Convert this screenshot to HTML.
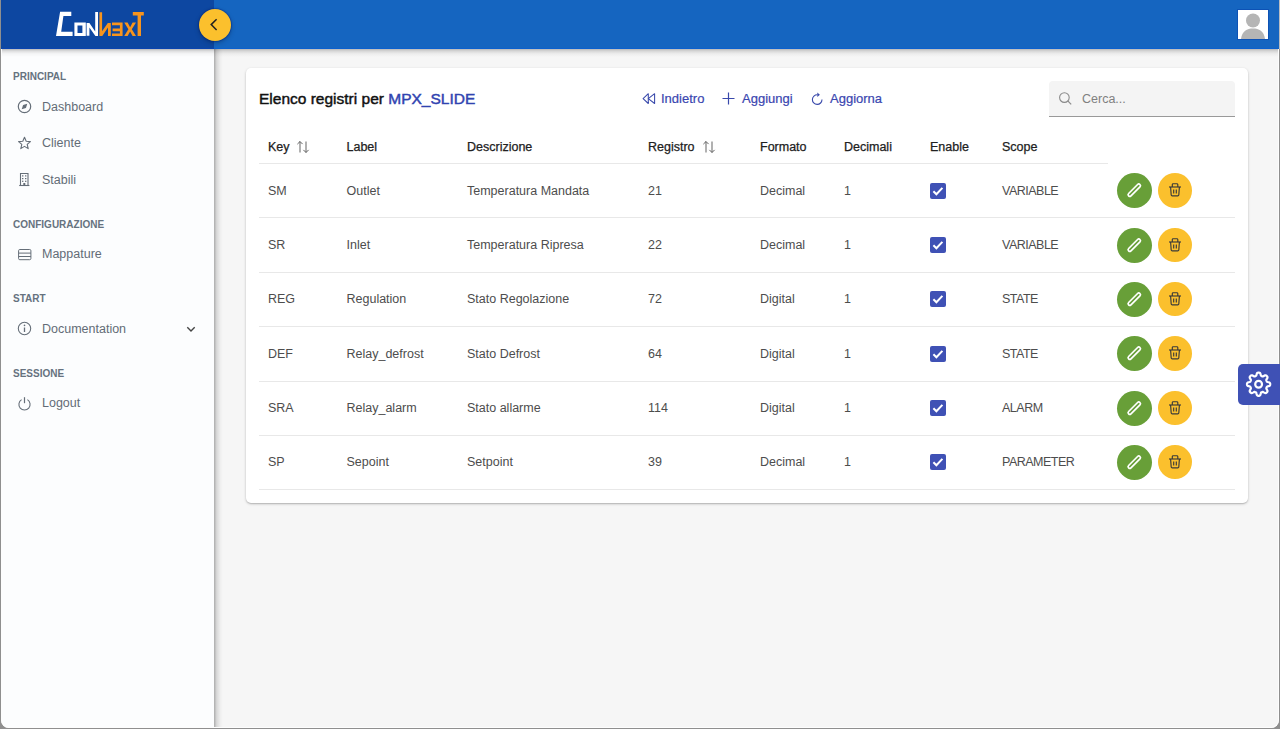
<!DOCTYPE html>
<html><head><meta charset="utf-8">
<style>
*{box-sizing:border-box;margin:0;padding:0}
html,body{width:1280px;height:729px;overflow:hidden;background:#f6f6f6;font-family:"Liberation Sans",sans-serif;position:relative}
div{position:absolute;white-space:nowrap}
svg{display:block}
#hdrL{left:0;top:0;width:214px;height:49px;background:#0d47a1;border-bottom:1px solid #0a44b0}
#hdrR{left:214px;top:0;width:1066px;height:49px;background:#1565c0;border-bottom:1px solid #0b60cf}
#hdrShadow{left:214px;top:49px;width:1066px;height:8px;background:linear-gradient(rgba(0,0,0,.25),rgba(0,0,0,.13) 25%,rgba(0,0,0,.04) 60%,rgba(0,0,0,0))}
#side{left:0;top:49px;width:214px;height:680px;background:#fcfdfe}
#sideR{left:214px;top:49px;width:9px;height:680px;background:linear-gradient(to right,rgba(0,0,0,.30),rgba(0,0,0,.12) 30%,rgba(0,0,0,.03) 70%,rgba(0,0,0,0))}
#sideShadow{left:0;top:49px;width:214px;height:8px;background:linear-gradient(rgba(0,0,0,.27),rgba(0,0,0,.12) 25%,rgba(0,0,0,.03) 60%,rgba(0,0,0,0))}
.sec{left:13px;font-size:10px;font-weight:bold;color:#66727f;line-height:12px}
.item{left:42px;font-size:12.5px;color:#636c76;line-height:15px}
.ico{left:17px}
#card{left:246px;top:68px;width:1002px;height:435px;background:#fff;border-radius:5px;box-shadow:0 1px 3px rgba(0,0,0,.2),0 1px 1px rgba(0,0,0,.12)}
.title{left:259px;top:90px;font-size:15.5px;color:#111;line-height:18px;-webkit-text-stroke:0.45px #111}
.title span{color:#3043b0;-webkit-text-stroke:0.45px #3043b0}
.tb{top:91px;font-size:13px;color:#3a46b0;line-height:15px;-webkit-text-stroke:0.2px #3a46b0}
.tbi{top:91px}
#search{left:1049px;top:81px;width:186px;height:36px;background:#f4f4f4;border-radius:4px 4px 0 0;border-bottom:1px solid #999}
#cerca{left:1082px;top:92px;font-size:12.5px;color:#808080;line-height:15px}
.th{top:140px;font-size:12.5px;color:#212121;line-height:15px;-webkit-text-stroke:0.25px #212121}
.hline{left:259px;width:849px;height:1px;background:#e8e8e8}
.rline{left:259px;width:976px;height:1px;background:#e8e8e8}
.td{font-size:12.5px;color:#4d4d4d;line-height:15px}
.up{letter-spacing:-0.5px}
.cb{left:930px;width:16px;height:16px;background:#3f51b5;border-radius:2px}
.btn{width:35px;height:35px;border-radius:50%}
.g{background:#689f38;left:1116.7px}
.y{background:#fbc02d;left:1158.2px;width:34px;height:34.5px}
#gear{z-index:12;left:1238px;top:364px;width:42px;height:41px;background:#3f51b5;border-radius:5px 0 0 5px}
#frame{z-index:10;left:1px;top:-20px;width:1278px;height:748px;border-radius:8px;border:1px solid #fdfdfd;border-top:0;box-shadow:0 0 0 40px #8f8f8f}
#toggle{left:199px;top:9px;width:32px;height:32px;border-radius:50%;background:#fbc02d;box-shadow:0 0 1px 1px rgba(0,30,120,.35),0 2px 5px rgba(0,0,0,.25)}
#avatar{left:1238px;top:10px;width:30px;height:29px;background:#fff;overflow:hidden;box-shadow:0 0 0 1px rgba(0,50,160,.35)}

#fixL{left:1px;top:0;width:1px;height:49px;background:#0d47a1;z-index:11}
#fixR{left:1278px;top:0;width:1px;height:49px;background:#1565c0;z-index:11}
#fixR2{left:1279px;top:0;width:1px;height:49px;background:#b9bcc2;z-index:11}

</style></head><body>
<div id="hdrL"></div>
<div id="hdrR"></div>
<div id="hdrShadow"></div>
<div id="side"></div>
<div id="sideR"></div>
<div id="sideShadow"></div>
<!-- logo -->
<div style="left:50px;top:8px"><svg width="100" height="32" viewBox="50 8 100 32">
<g fill="#fff">
<path d="M60.1 11.7 H71.3 V15.9 H63.4 L61.2 31.7 H72.6 V36.1 H56 Z"/>
<path d="M74.4 22.5 H85.8 V36.1 H74.4 Z M77.5 25.6 V33 H82.4 V25.6 Z" fill-rule="evenodd"/>
<path d="M86.6 22.9 H89.4 L95.2 31.5 V12 H98 V36.1 H95.4 L89.4 27.4 V35.8 H86.6 Z"/>
</g>
<g fill="#f7941d">
<path d="M99.4 12.2 H102.1 V31.3 L107.8 22.9 H110.8 V36.1 H108 V27.4 L102.3 36.1 H99.4 Z"/>
<path d="M112 22.5 H122.6 V36.1 H112 V33.4 H119.9 V31.3 H112.6 V28.6 H119.9 V25.3 H112 Z"/>
<path d="M124.2 22.6 H127.6 L130.1 27.2 L132.6 22.6 H136 L131.8 29.3 L136 36.1 H132.6 L130.1 31.4 L127.6 36.1 H124.2 L128.4 29.3 Z"/>
<path d="M132.8 12 H143.8 V15.5 H141 V36.1 H137.6 V15.5 H132.8 Z"/>
</g></svg></div>
<div id="toggle"><svg width="32" height="32" viewBox="0 0 32 32"><path d="M17.6 10.2 L12.2 15.6 L17.6 21" fill="none" stroke="#222" stroke-width="1.5"/></svg></div>
<div id="avatar"><svg width="30" height="29" viewBox="0 0 30 29"><circle cx="15" cy="10.5" r="7" fill="#b5b5b5"/><path d="M3 29 C4 21 9 18.5 15 18.5 C21 18.5 26 21 27 29 Z" fill="#b5b5b5"/></svg></div>
<!-- sidebar -->
<div class="sec" style="top:71px">PRINCIPAL</div>
<div class="ico" style="top:99px"><svg width="15" height="15" viewBox="0 0 15 15"><circle cx="7.5" cy="7.5" r="6.2" fill="none" stroke="#656e78" stroke-width="1.2"/><path d="M10.3 4.7 L8.9 8.9 L4.7 10.3 L6.1 6.1 Z" fill="#656e78"/></svg></div>
<div class="item" style="top:100px">Dashboard</div>
<div class="ico" style="top:136px"><svg width="15" height="15" viewBox="0 0 15 15"><path d="M7.5 1.3 L9.2 5.2 L13.4 5.6 L10.2 8.4 L11.2 12.6 L7.5 10.4 L3.8 12.6 L4.8 8.4 L1.6 5.6 L5.8 5.2 Z" fill="none" stroke="#656e78" stroke-width="1.1" stroke-linejoin="round"/></svg></div>
<div class="item" style="top:136px">Cliente</div>
<div class="ico" style="top:172px"><svg width="15" height="15" viewBox="0 0 15 15"><g fill="none" stroke="#656e78" stroke-width="1.1"><path d="M3.5 13.5 V1.5 H11 V13.5"/><path d="M2.2 13.5 H12.4"/></g><g fill="#656e78"><rect x="5" y="3.3" width="1.4" height="1.2"/><rect x="8" y="3.3" width="1.4" height="1.2"/><rect x="5" y="6" width="1.4" height="1.2"/><rect x="8" y="6" width="1.4" height="1.2"/><rect x="5" y="8.7" width="1.4" height="1.2"/><rect x="8" y="8.7" width="1.4" height="1.2"/><rect x="6.3" y="11" width="2" height="2.5"/></g></svg></div>
<div class="item" style="top:173px">Stabili</div>
<div class="sec" style="top:219px">CONFIGURAZIONE</div>
<div class="ico" style="top:247px"><svg width="15" height="15" viewBox="0 0 15 15"><g fill="none" stroke="#656e78" stroke-width="1"><rect x="1.6" y="2.5" width="12.3" height="10.2" rx="1.2"/><path d="M1.6 6.1H13.9M1.6 9.5H13.9"/></g></svg></div>
<div class="item" style="top:247px">Mappature</div>
<div class="sec" style="top:293px">START</div>
<div class="ico" style="top:321px"><svg width="15" height="15" viewBox="0 0 15 15"><circle cx="7.5" cy="7.5" r="6.2" fill="none" stroke="#656e78" stroke-width="1.1"/><path d="M7.5 6.5V11" stroke="#656e78" stroke-width="1.3"/><circle cx="7.5" cy="4.4" r="0.8" fill="#656e78"/></svg></div>
<div class="item" style="top:322px">Documentation</div>
<div style="left:185px;top:323px"><svg width="12" height="12" viewBox="0 0 12 12"><path d="M2.3 4.2 L6 7.9 L9.7 4.2" fill="none" stroke="#444" stroke-width="1.4"/></svg></div>
<div class="sec" style="top:368px">SESSIONE</div>
<div class="ico" style="top:396px"><svg width="15" height="15" viewBox="0 0 15 15"><path d="M4.6 3.6 A5.6 5.6 0 1 0 10.4 3.6" fill="none" stroke="#656e78" stroke-width="1.1"/><path d="M7.5 1.2V7.2" stroke="#656e78" stroke-width="1.2"/></svg></div>
<div class="item" style="top:396px">Logout</div>
<!-- card -->
<div id="card"></div>
<div class="title">Elenco registri per <span>MPX_SLIDE</span></div>
<div class="tbi" style="left:641px"><svg width="15" height="15" viewBox="0 0 15 15"><g fill="none" stroke="#3949ab" stroke-width="1.05" stroke-linejoin="round"><path d="M7.3 2.7 L2.1 7.7 L7.3 12.5 Z"/><path d="M13.6 2.7 L7.3 7.7 L13.6 12.5 Z"/></g></svg></div>
<div class="tb" style="left:661px">Indietro</div>
<div class="tbi" style="left:721px"><svg width="15" height="15" viewBox="0 0 15 15"><path d="M7.5 1.5V13.5M1.5 7.5H13.5" stroke="#3949ab" stroke-width="1.2"/></svg></div>
<div class="tb" style="left:742px">Aggiungi</div>
<div class="tbi" style="left:809px"><svg width="15" height="15" viewBox="0 0 15 15"><path d="M13 8.6 A4.8 4.8 0 1 1 8.4 3.8" fill="none" stroke="#3949ab" stroke-width="1.1"/><path d="M8.3 1.5 L10.9 3.8 L8.3 6.1 Z" fill="#3949ab"/></svg></div>
<div class="tb" style="left:830px">Aggiorna</div>
<div id="search"></div>
<div style="left:1058px;top:91px"><svg width="15" height="15" viewBox="0 0 15 15"><circle cx="6.4" cy="6.6" r="4.8" fill="none" stroke="#8a8a8a" stroke-width="1.1"/><path d="M10 10.2 L13.2 13.4" stroke="#8a8a8a" stroke-width="1.2"/></svg></div>
<div id="cerca">Cerca...</div>
<!-- sort icons -->
<div style="left:296px;top:140px"><svg width="14" height="14" viewBox="0 0 14 14"><g fill="none" stroke="#5c5c5c" stroke-width="0.95"><path d="M4 1.5V12.5M1.4 4.1L4 1.5L6.6 4.1"/><path d="M10 1.5V12.5M7.4 9.9L10 12.5L12.6 9.9"/></g></svg></div>
<div style="left:702px;top:140px"><svg width="14" height="14" viewBox="0 0 14 14"><g fill="none" stroke="#5c5c5c" stroke-width="0.95"><path d="M4 1.5V12.5M1.4 4.1L4 1.5L6.6 4.1"/><path d="M10 1.5V12.5M7.4 9.9L10 12.5L12.6 9.9"/></g></svg></div>
<!-- gear -->
<div id="gear"><svg width="42" height="41" viewBox="0 0 42 41"><path d="M32.20 20.20 L32.18 20.65 L32.09 21.10 L31.86 21.53 L31.37 21.91 L30.51 22.17 L29.64 22.37 L29.12 22.60 L28.85 22.88 L28.68 23.18 L28.55 23.49 L28.42 23.81 L28.33 24.14 L28.33 24.53 L28.53 25.06 L29.00 25.81 L29.42 26.61 L29.51 27.22 L29.36 27.68 L29.11 28.06 L28.80 28.40 L28.46 28.71 L28.08 28.96 L27.62 29.11 L27.01 29.02 L26.21 28.60 L25.46 28.13 L24.93 27.93 L24.54 27.93 L24.21 28.02 L23.89 28.15 L23.58 28.28 L23.28 28.45 L23.00 28.72 L22.77 29.24 L22.57 30.11 L22.31 30.97 L21.93 31.46 L21.50 31.69 L21.05 31.78 L20.60 31.80 L20.15 31.78 L19.70 31.69 L19.27 31.46 L18.89 30.97 L18.63 30.11 L18.43 29.24 L18.20 28.72 L17.92 28.45 L17.62 28.28 L17.31 28.15 L16.99 28.02 L16.66 27.93 L16.27 27.93 L15.74 28.13 L14.99 28.60 L14.19 29.02 L13.58 29.11 L13.12 28.96 L12.74 28.71 L12.40 28.40 L12.09 28.06 L11.84 27.68 L11.69 27.22 L11.78 26.61 L12.20 25.81 L12.67 25.06 L12.87 24.53 L12.87 24.14 L12.78 23.81 L12.65 23.49 L12.52 23.18 L12.35 22.88 L12.08 22.60 L11.56 22.37 L10.69 22.17 L9.83 21.91 L9.34 21.53 L9.11 21.10 L9.02 20.65 L9.00 20.20 L9.02 19.75 L9.11 19.30 L9.34 18.87 L9.83 18.49 L10.69 18.23 L11.56 18.03 L12.08 17.80 L12.35 17.52 L12.52 17.22 L12.65 16.91 L12.78 16.59 L12.87 16.26 L12.87 15.87 L12.67 15.34 L12.20 14.59 L11.78 13.79 L11.69 13.18 L11.84 12.72 L12.09 12.34 L12.40 12.00 L12.74 11.69 L13.12 11.44 L13.58 11.29 L14.19 11.38 L14.99 11.80 L15.74 12.27 L16.27 12.47 L16.66 12.47 L16.99 12.38 L17.31 12.25 L17.62 12.12 L17.92 11.95 L18.20 11.68 L18.43 11.16 L18.63 10.29 L18.89 9.43 L19.27 8.94 L19.70 8.71 L20.15 8.62 L20.60 8.60 L21.05 8.62 L21.50 8.71 L21.93 8.94 L22.31 9.43 L22.57 10.29 L22.77 11.16 L23.00 11.68 L23.28 11.95 L23.58 12.12 L23.89 12.25 L24.21 12.38 L24.54 12.47 L24.93 12.47 L25.46 12.27 L26.21 11.80 L27.01 11.38 L27.62 11.29 L28.08 11.44 L28.46 11.69 L28.80 12.00 L29.11 12.34 L29.36 12.72 L29.51 13.18 L29.42 13.79 L29.00 14.59 L28.53 15.34 L28.33 15.87 L28.33 16.26 L28.42 16.59 L28.55 16.91 L28.68 17.22 L28.85 17.52 L29.12 17.80 L29.64 18.03 L30.51 18.23 L31.37 18.49 L31.86 18.87 L32.09 19.30 L32.18 19.75 Z" fill="none" stroke="#fff" stroke-width="2.2"/><circle cx="20.6" cy="20.2" r="3.4" fill="none" stroke="#fff" stroke-width="2.2"/></svg></div>
<div id="frame"></div>
<div id="fixL"></div>
<div id="fixR"></div>
<div id="fixR2"></div>
<div class="th" style="left:268px">Key</div>
<div class="th" style="left:346.5px">Label</div>
<div class="th" style="left:467px">Descrizione</div>
<div class="th" style="left:648px">Registro</div>
<div class="th" style="left:760px">Formato</div>
<div class="th" style="left:844px">Decimali</div>
<div class="th" style="left:930px">Enable</div>
<div class="th" style="left:1002px">Scope</div>
<div class="hline" style="top:163px"></div>
<div class="td" style="left:268px;top:183.8px">SM</div>
<div class="td" style="left:346.5px;top:183.8px">Outlet</div>
<div class="td" style="left:467px;top:183.8px">Temperatura Mandata</div>
<div class="td" style="left:648px;top:183.8px">21</div>
<div class="td" style="left:760px;top:183.8px">Decimal</div>
<div class="td" style="left:844px;top:183.8px">1</div>
<div class="td up" style="left:1002px;top:183.8px">VARIABLE</div>
<div class="cb" style="top:182.8px"><svg width="16" height="16" viewBox="0 0 16 16"><path d="M3.4 8.3l3 3 6-6.4" fill="none" stroke="#fff" stroke-width="2"/></svg></div>
<div class="btn g" style="top:173.3px"><svg width="35" height="35" viewBox="0 0 35 35"><rect x="-1.55" y="-8.3" width="3.3" height="16" rx="1.65" transform="translate(17 17.3) rotate(45)" fill="none" stroke="#fff" stroke-width="1.7"/></svg></div>
<div class="btn y" style="top:173.3px"><svg width="34.5" height="34.5" viewBox="0 0 34.5 34.5"><g fill="none" stroke="#3a3a3a" stroke-width="1.15"><path d="M11 14H23"/><path d="M14.3 14V11.6a0.9 0.9 0 0 1 0.9-0.9H18.9a0.9 0.9 0 0 1 0.9 0.9V14"/><path d="M12.6 14L13.2 22a1 1 0 0 0 1 0.9H19.8a1 1 0 0 0 1-0.9L21.4 14"/><path d="M15.7 16.6V20.4M18.3 16.6V20.4"/></g></svg></div>
<div class="rline" style="top:217px"></div>
<div class="td" style="left:268px;top:238.2px">SR</div>
<div class="td" style="left:346.5px;top:238.2px">Inlet</div>
<div class="td" style="left:467px;top:238.2px">Temperatura Ripresa</div>
<div class="td" style="left:648px;top:238.2px">22</div>
<div class="td" style="left:760px;top:238.2px">Decimal</div>
<div class="td" style="left:844px;top:238.2px">1</div>
<div class="td up" style="left:1002px;top:238.2px">VARIABLE</div>
<div class="cb" style="top:237.2px"><svg width="16" height="16" viewBox="0 0 16 16"><path d="M3.4 8.3l3 3 6-6.4" fill="none" stroke="#fff" stroke-width="2"/></svg></div>
<div class="btn g" style="top:227.7px"><svg width="35" height="35" viewBox="0 0 35 35"><rect x="-1.55" y="-8.3" width="3.3" height="16" rx="1.65" transform="translate(17 17.3) rotate(45)" fill="none" stroke="#fff" stroke-width="1.7"/></svg></div>
<div class="btn y" style="top:227.7px"><svg width="34.5" height="34.5" viewBox="0 0 34.5 34.5"><g fill="none" stroke="#3a3a3a" stroke-width="1.15"><path d="M11 14H23"/><path d="M14.3 14V11.6a0.9 0.9 0 0 1 0.9-0.9H18.9a0.9 0.9 0 0 1 0.9 0.9V14"/><path d="M12.6 14L13.2 22a1 1 0 0 0 1 0.9H19.8a1 1 0 0 0 1-0.9L21.4 14"/><path d="M15.7 16.6V20.4M18.3 16.6V20.4"/></g></svg></div>
<div class="rline" style="top:272px"></div>
<div class="td" style="left:268px;top:292.4px">REG</div>
<div class="td" style="left:346.5px;top:292.4px">Regulation</div>
<div class="td" style="left:467px;top:292.4px">Stato Regolazione</div>
<div class="td" style="left:648px;top:292.4px">72</div>
<div class="td" style="left:760px;top:292.4px">Digital</div>
<div class="td" style="left:844px;top:292.4px">1</div>
<div class="td up" style="left:1002px;top:292.4px">STATE</div>
<div class="cb" style="top:291.4px"><svg width="16" height="16" viewBox="0 0 16 16"><path d="M3.4 8.3l3 3 6-6.4" fill="none" stroke="#fff" stroke-width="2"/></svg></div>
<div class="btn g" style="top:281.9px"><svg width="35" height="35" viewBox="0 0 35 35"><rect x="-1.55" y="-8.3" width="3.3" height="16" rx="1.65" transform="translate(17 17.3) rotate(45)" fill="none" stroke="#fff" stroke-width="1.7"/></svg></div>
<div class="btn y" style="top:281.9px"><svg width="34.5" height="34.5" viewBox="0 0 34.5 34.5"><g fill="none" stroke="#3a3a3a" stroke-width="1.15"><path d="M11 14H23"/><path d="M14.3 14V11.6a0.9 0.9 0 0 1 0.9-0.9H18.9a0.9 0.9 0 0 1 0.9 0.9V14"/><path d="M12.6 14L13.2 22a1 1 0 0 0 1 0.9H19.8a1 1 0 0 0 1-0.9L21.4 14"/><path d="M15.7 16.6V20.4M18.3 16.6V20.4"/></g></svg></div>
<div class="rline" style="top:326px"></div>
<div class="td" style="left:268px;top:346.7px">DEF</div>
<div class="td" style="left:346.5px;top:346.7px">Relay_defrost</div>
<div class="td" style="left:467px;top:346.7px">Stato Defrost</div>
<div class="td" style="left:648px;top:346.7px">64</div>
<div class="td" style="left:760px;top:346.7px">Digital</div>
<div class="td" style="left:844px;top:346.7px">1</div>
<div class="td up" style="left:1002px;top:346.7px">STATE</div>
<div class="cb" style="top:345.7px"><svg width="16" height="16" viewBox="0 0 16 16"><path d="M3.4 8.3l3 3 6-6.4" fill="none" stroke="#fff" stroke-width="2"/></svg></div>
<div class="btn g" style="top:336.2px"><svg width="35" height="35" viewBox="0 0 35 35"><rect x="-1.55" y="-8.3" width="3.3" height="16" rx="1.65" transform="translate(17 17.3) rotate(45)" fill="none" stroke="#fff" stroke-width="1.7"/></svg></div>
<div class="btn y" style="top:336.2px"><svg width="34.5" height="34.5" viewBox="0 0 34.5 34.5"><g fill="none" stroke="#3a3a3a" stroke-width="1.15"><path d="M11 14H23"/><path d="M14.3 14V11.6a0.9 0.9 0 0 1 0.9-0.9H18.9a0.9 0.9 0 0 1 0.9 0.9V14"/><path d="M12.6 14L13.2 22a1 1 0 0 0 1 0.9H19.8a1 1 0 0 0 1-0.9L21.4 14"/><path d="M15.7 16.6V20.4M18.3 16.6V20.4"/></g></svg></div>
<div class="rline" style="top:381px"></div>
<div class="td" style="left:268px;top:401.0px">SRA</div>
<div class="td" style="left:346.5px;top:401.0px">Relay_alarm</div>
<div class="td" style="left:467px;top:401.0px">Stato allarme</div>
<div class="td" style="left:648px;top:401.0px">114</div>
<div class="td" style="left:760px;top:401.0px">Digital</div>
<div class="td" style="left:844px;top:401.0px">1</div>
<div class="td up" style="left:1002px;top:401.0px">ALARM</div>
<div class="cb" style="top:400.0px"><svg width="16" height="16" viewBox="0 0 16 16"><path d="M3.4 8.3l3 3 6-6.4" fill="none" stroke="#fff" stroke-width="2"/></svg></div>
<div class="btn g" style="top:390.5px"><svg width="35" height="35" viewBox="0 0 35 35"><rect x="-1.55" y="-8.3" width="3.3" height="16" rx="1.65" transform="translate(17 17.3) rotate(45)" fill="none" stroke="#fff" stroke-width="1.7"/></svg></div>
<div class="btn y" style="top:390.5px"><svg width="34.5" height="34.5" viewBox="0 0 34.5 34.5"><g fill="none" stroke="#3a3a3a" stroke-width="1.15"><path d="M11 14H23"/><path d="M14.3 14V11.6a0.9 0.9 0 0 1 0.9-0.9H18.9a0.9 0.9 0 0 1 0.9 0.9V14"/><path d="M12.6 14L13.2 22a1 1 0 0 0 1 0.9H19.8a1 1 0 0 0 1-0.9L21.4 14"/><path d="M15.7 16.6V20.4M18.3 16.6V20.4"/></g></svg></div>
<div class="rline" style="top:435px"></div>
<div class="td" style="left:268px;top:455.3px">SP</div>
<div class="td" style="left:346.5px;top:455.3px">Sepoint</div>
<div class="td" style="left:467px;top:455.3px">Setpoint</div>
<div class="td" style="left:648px;top:455.3px">39</div>
<div class="td" style="left:760px;top:455.3px">Decimal</div>
<div class="td" style="left:844px;top:455.3px">1</div>
<div class="td up" style="left:1002px;top:455.3px">PARAMETER</div>
<div class="cb" style="top:454.3px"><svg width="16" height="16" viewBox="0 0 16 16"><path d="M3.4 8.3l3 3 6-6.4" fill="none" stroke="#fff" stroke-width="2"/></svg></div>
<div class="btn g" style="top:444.8px"><svg width="35" height="35" viewBox="0 0 35 35"><rect x="-1.55" y="-8.3" width="3.3" height="16" rx="1.65" transform="translate(17 17.3) rotate(45)" fill="none" stroke="#fff" stroke-width="1.7"/></svg></div>
<div class="btn y" style="top:444.8px"><svg width="34.5" height="34.5" viewBox="0 0 34.5 34.5"><g fill="none" stroke="#3a3a3a" stroke-width="1.15"><path d="M11 14H23"/><path d="M14.3 14V11.6a0.9 0.9 0 0 1 0.9-0.9H18.9a0.9 0.9 0 0 1 0.9 0.9V14"/><path d="M12.6 14L13.2 22a1 1 0 0 0 1 0.9H19.8a1 1 0 0 0 1-0.9L21.4 14"/><path d="M15.7 16.6V20.4M18.3 16.6V20.4"/></g></svg></div>
<div class="rline" style="top:489px"></div>
</body></html>
